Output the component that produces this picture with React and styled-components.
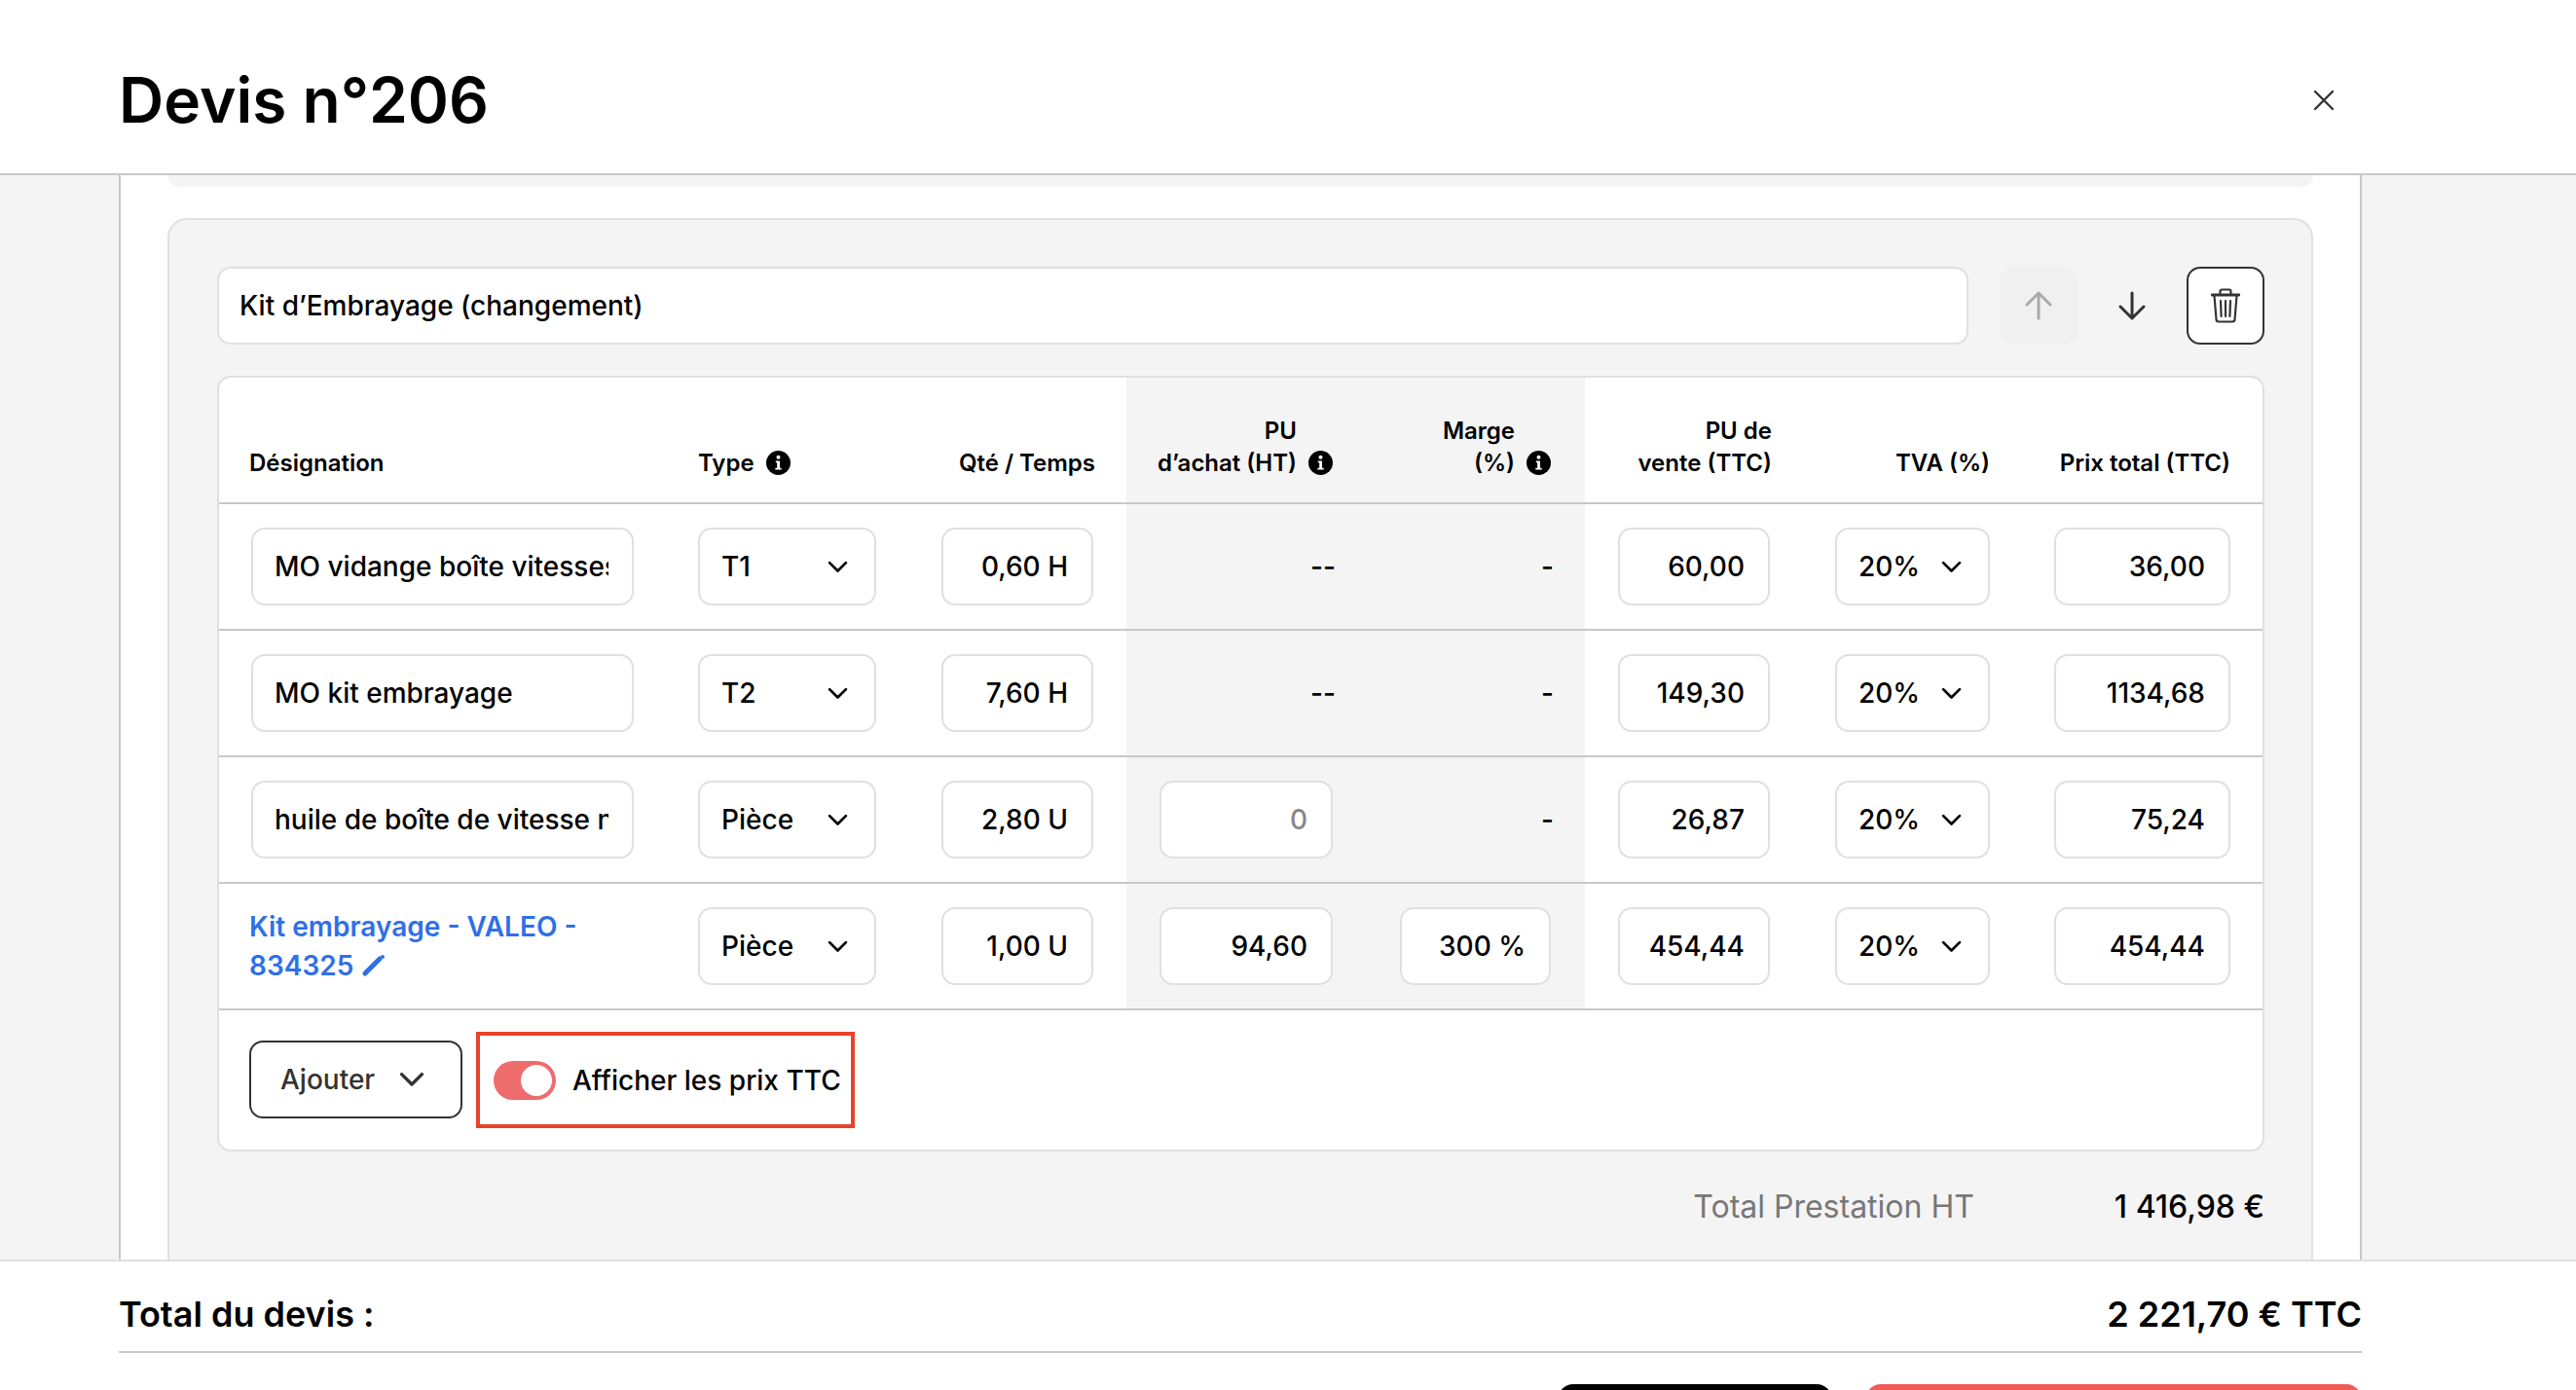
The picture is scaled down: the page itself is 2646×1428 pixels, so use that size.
import React from 'react';
import styled, { createGlobalStyle } from 'styled-components';

const Global = createGlobalStyle`
  html, body { margin: 0; padding: 0; height: 100%; overflow: hidden; background: #fff; }
  #root { height: 100%; }
  * { box-sizing: border-box; }
`;

const Page = styled.div`
  height: 1428px; display: flex; flex-direction: column; overflow: hidden;
  font-family: Inter, "Liberation Sans", sans-serif; color: #000; background: #fff;
`;
const Header = styled.header`
  flex: 0 0 180px; display: flex; align-items: center; justify-content: space-between;
  padding: 28px 248px 0 122px; background: #fff; border-bottom: 2px solid #c8c8c8;
`;
const Title = styled.h1`
  margin: 0; font-size: 64px; font-weight: 600; line-height: 1;
`;
const CloseButton = styled.button`
  width: 22px; height: 22px; padding: 0; border: 0; background: none; display: flex;
`;
const Main = styled.main`
  flex: 1 1 auto; min-height: 0; overflow: hidden; background: #f4f4f4; padding: 0 220px 0 122px;
`;
const Panel = styled.div`
  height: 100%; overflow: hidden; background: #fff; padding: 0 48px;
  border-left: 2px solid #c8c8c8; border-right: 2px solid #c8c8c8;
`;
const PreviousCard = styled.div`
  height: 12px; background: #f4f4f4; border-radius: 0 0 14px 14px;
`;
const Card = styled.section`
  margin-top: 32px; padding: 48px 48px 0 49px; background: #f4f4f4;
  border: 2px solid #e0e0e0; border-bottom: 0; border-radius: 20px 20px 0 0; height: 1200px;
`;
const TitleRow = styled.div`
  display: flex; gap: 16px; margin-bottom: 32px;
`;
const TitleInput = styled.div`
  flex: 1; height: 80px; margin-right: 16px; padding: 0 21px; display: flex; align-items: center;
  background: #fff; border: 2px solid #e0e0e0; border-radius: 14px; font-size: 28px; font-weight: 500;
`;
const IconButton = styled.button`
  flex: 0 0 80px; height: 80px; padding: 0; display: flex; align-items: center; justify-content: center;
  border-radius: 14px;
  border: 2px solid ${p => (p.$outlined ? '#333' : 'transparent')};
  background: ${p => (p.$disabled ? '#f0f0f0' : p.$outlined ? '#fff' : 'transparent')};
  color: ${p => (p.$disabled ? '#aaa' : '#333')};
`;
const Table = styled.div`
  background: #fff; border: 2px solid #e0e0e0; border-radius: 14px; overflow: hidden;
`;
const Row = styled.div`
  display: grid; grid-template-columns: 459px 249px 224px 246px 225px 224px 225px 1fr;
  height: 130px; border-bottom: 2px solid #c8c8c8;
  & > * { padding-left: 34px; padding-right: 34px; }
  & > :nth-child(-n+2), & > :nth-child(n+7) { padding-left: 33px; padding-right: 33px; }
  & > :nth-child(5) { padding-left: 35px; padding-right: 35px; }
`;
const HeadCell = styled.div`
  padding-bottom: 24px; display: flex; align-items: flex-end; gap: 12px;
  justify-content: ${p => (p.$right ? 'flex-end' : 'flex-start')};
  background: ${p => (p.$shaded ? '#f4f4f4' : 'transparent')};
  font-size: 24px; font-weight: 600; line-height: 33px; text-align: right; white-space: nowrap;
`;
const FirstHeadLabel = styled.span`
  margin-left: -2px;
`;
const EdgeHeadLabel = styled.span`
  margin-right: -2px;
`;
const Cell = styled.div`
  display: flex; align-items: center;
  justify-content: ${p => (p.$right ? 'flex-end' : 'flex-start')};
  background: ${p => (p.$shaded ? '#f4f4f4' : 'transparent')};
  font-size: 28px; font-weight: 500;
`;
const EmptyValue = styled.span`
  margin-right: -3px;
`;
const Field = styled.div`
  flex: 1; min-width: 0; height: 80px; padding: 0 24px 0 22px; display: flex; align-items: center;
  justify-content: ${p => (p.$right ? 'flex-end' : 'flex-start')};
  background: #fff; border: 2px solid #e0e0e0; border-radius: 14px;
  font-size: 28px; font-weight: 500; white-space: nowrap;
  color: ${p => (p.$muted ? '#888' : '#000')};
`;
const Clip = styled.span`
  display: block; overflow: hidden; white-space: nowrap;
`;
const SelectBox = styled(Field)`
  justify-content: space-between; padding-right: 27px;
`;
const PartLink = styled.a`
  color: #2f6fe8; font-size: 28px; font-weight: 600; line-height: 40px;
  margin-left: -2px; width: 360px;
  svg { margin-left: 8px; vertical-align: -3px; }
`;
const TableFooter = styled.div`
  height: 143px; padding: 0 33px 0 31px; display: flex; align-items: center; gap: 14px;
`;
const AddButton = styled.button`
  width: 219px; height: 80px; padding: 0 37px 0 30px; display: flex; align-items: center; justify-content: space-between;
  margin-top: -2px; background: #fff; border: 2px solid #333; border-radius: 14px; color: #333;
  font: 500 28px Inter, "Liberation Sans", sans-serif;
`;
const Highlight = styled.div`
  width: 389px; height: 99px; padding: 0 0 0 14px; display: flex; align-items: center; gap: 17px;
  border: 4px solid #e8432a; font-size: 28px; font-weight: 500; white-space: nowrap;
`;
const Toggle = styled.span`
  flex: 0 0 64px; height: 40px; padding: 4px; display: flex; justify-content: flex-end;
  background: #ee6c6c; border-radius: 20px;
  &::after { content: ""; width: 32px; height: 32px; border-radius: 50%; background: #fff; }
`;
const PrestationTotal = styled.div`
  display: flex; justify-content: flex-end; align-items: center; gap: 144px; height: 112px; font-size: 32px;
`;
const TotalLabel = styled.span`
  color: #777;
`;
const TotalValue = styled.span`
  font-weight: 500;
`;
const Footer = styled.footer`
  flex: 0 0 134px; overflow: hidden; padding: 0 220px 0 122px; background: #fff; border-top: 2px solid #e0e0e0;
`;
const GrandTotal = styled.div`
  height: 94px; padding-top: 16px; display: flex; align-items: center; justify-content: space-between;
  border-bottom: 2px solid #c8c8c8; font-size: 36px; font-weight: 600;
`;
const Actions = styled.div`
  display: flex; justify-content: flex-end; gap: 34px; margin-top: 32px;
`;
const ActionButton = styled.div`
  width: ${p => p.$width}px; height: 80px; border-radius: 16px 16px 0 0; background: ${p => p.$bg};
`;

const Info = () => (
  <svg width="25" height="25" viewBox="0 0 25 25" style={{ flex: '0 0 25px', marginBottom: 4 }}>
    <circle cx="12.5" cy="12.5" r="12.5" fill="#000" />
    <circle cx="12.5" cy="6.8" r="2" fill="#fff" />
    <path d="M9.8 10.5h4.2v7.2h1.7v1.8H9.3v-1.8h1.9v-5.4H9.8z" fill="#fff" />
  </svg>
);
const Chevron = ({ size = 21 }) => (
  <svg width={size} height={size * 0.6} viewBox="0 0 20 12" fill="none" stroke="currentColor" strokeWidth="2.6" strokeLinecap="round" strokeLinejoin="round">
    <path d="M2 2l8 8 8-8" />
  </svg>
);
const Arrow = ({ up }) => (
  <svg width="28" height="30" viewBox="0 0 28 30" fill="none" stroke="currentColor" strokeWidth="3" strokeLinecap="round" strokeLinejoin="round" style={{ transform: up ? 'none' : 'rotate(180deg)' }}>
    <path d="M14 28V2M2 14L14 2l12 12" />
  </svg>
);
const Trash = () => (
  <svg width="30" height="36" viewBox="0 0 30 36" fill="none" stroke="#333" strokeWidth="2.2" strokeLinecap="round" strokeLinejoin="round">
    <path d="M1 7h28" strokeWidth="2.8" />
    <path d="M9.5 6V3.5a2 2 0 0 1 2-2h7a2 2 0 0 1 2 2V6" />
    <path d="M3.5 8l2 24a2.5 2.5 0 0 0 2.5 2.5h14a2.5 2.5 0 0 0 2.5-2.5l2-24" />
    <path d="M10 13l.6 16M15 13v16M20 13l-.6 16" strokeWidth="2.2" />
  </svg>
);
const Close = () => (
  <svg width="22" height="22" viewBox="0 0 22 22" fill="none" stroke="#333" strokeWidth="2.4" strokeLinecap="round">
    <path d="M2 2l18 18M20 2L2 20" />
  </svg>
);
const Pencil = () => (
  <svg width="24" height="24" viewBox="0 0 24 24" fill="#2f6fe8">
    <path d="M4 19L19 4" stroke="#2f6fe8" strokeWidth="5" strokeLinecap="round" />
    <circle cx="22" cy="2" r="2" />
  </svg>
);

const rows = [
  { name: 'MO vidange boîte vitesses', type: 'T1', qty: '0,60 H', pu: '60,00', total: '36,00', buy: null, margin: null },
  { name: 'MO kit embrayage', type: 'T2', qty: '7,60 H', pu: '149,30', total: '1134,68', buy: null, margin: null },
  { name: 'huile de boîte de vitesse neuve', type: 'Pièce', qty: '2,80 U', pu: '26,87', total: '75,24', buy: '0', margin: null },
  { link: true, type: 'Pièce', qty: '1,00 U', pu: '454,44', total: '454,44', buy: '94,60', margin: '300 %' },
];

export default function App() {
  return (
    <Page>
      <Global />
      <Header>
        <Title>Devis n°206</Title>
        <CloseButton aria-label="Fermer"><Close /></CloseButton>
      </Header>
      <Main>
        <Panel>
          <PreviousCard />
          <Card>
            <TitleRow>
              <TitleInput>Kit d’Embrayage (changement)</TitleInput>
              <IconButton $disabled><Arrow up /></IconButton>
              <IconButton><Arrow /></IconButton>
              <IconButton $outlined><Trash /></IconButton>
            </TitleRow>
            <Table>
              <Row>
                <HeadCell><FirstHeadLabel>Désignation</FirstHeadLabel></HeadCell>
                <HeadCell>Type <Info /></HeadCell>
                <HeadCell $right><EdgeHeadLabel>Qté / Temps</EdgeHeadLabel></HeadCell>
                <HeadCell $right $shaded><span>PU<br />d’achat (HT)</span> <Info /></HeadCell>
                <HeadCell $right $shaded><span>Marge<br />(%)</span> <Info /></HeadCell>
                <HeadCell $right><EdgeHeadLabel>PU de<br />vente (TTC)</EdgeHeadLabel></HeadCell>
                <HeadCell $right>TVA (%)</HeadCell>
                <HeadCell $right>Prix total (TTC)</HeadCell>
              </Row>
              {rows.map((r, i) => (
                <Row key={i}>
                  <Cell>
                    {r.link ? (
                      <PartLink>Kit embrayage - VALEO - 834325<Pencil /></PartLink>
                    ) : (
                      <Field><Clip>{r.name}</Clip></Field>
                    )}
                  </Cell>
                  <Cell><SelectBox>{r.type}<Chevron /></SelectBox></Cell>
                  <Cell><Field $right>{r.qty}</Field></Cell>
                  <Cell $right $shaded>
                    {r.buy === null ? <EmptyValue>--</EmptyValue> : <Field $right $muted={r.buy === '0'}>{r.buy}</Field>}
                  </Cell>
                  <Cell $right $shaded>
                    {r.margin === null ? <EmptyValue>-</EmptyValue> : <Field $right>{r.margin}</Field>}
                  </Cell>
                  <Cell><Field $right>{r.pu}</Field></Cell>
                  <Cell><SelectBox>20%<Chevron /></SelectBox></Cell>
                  <Cell><Field $right>{r.total}</Field></Cell>
                </Row>
              ))}
              <TableFooter>
                <AddButton>Ajouter <Chevron size={26} /></AddButton>
                <Highlight><Toggle />Afficher les prix TTC</Highlight>
              </TableFooter>
            </Table>
            <PrestationTotal>
              <TotalLabel>Total Prestation HT</TotalLabel>
              <TotalValue>1 416,98 €</TotalValue>
            </PrestationTotal>
          </Card>
        </Panel>
      </Main>
      <Footer>
        <GrandTotal>
          <span>Total du devis :</span>
          <span>2 221,70 € TTC</span>
        </GrandTotal>
        <Actions>
          <ActionButton $width={282} $bg="#000" />
          <ActionButton $width={510} $bg="#f05a57" />
        </Actions>
      </Footer>
    </Page>
  );
}
